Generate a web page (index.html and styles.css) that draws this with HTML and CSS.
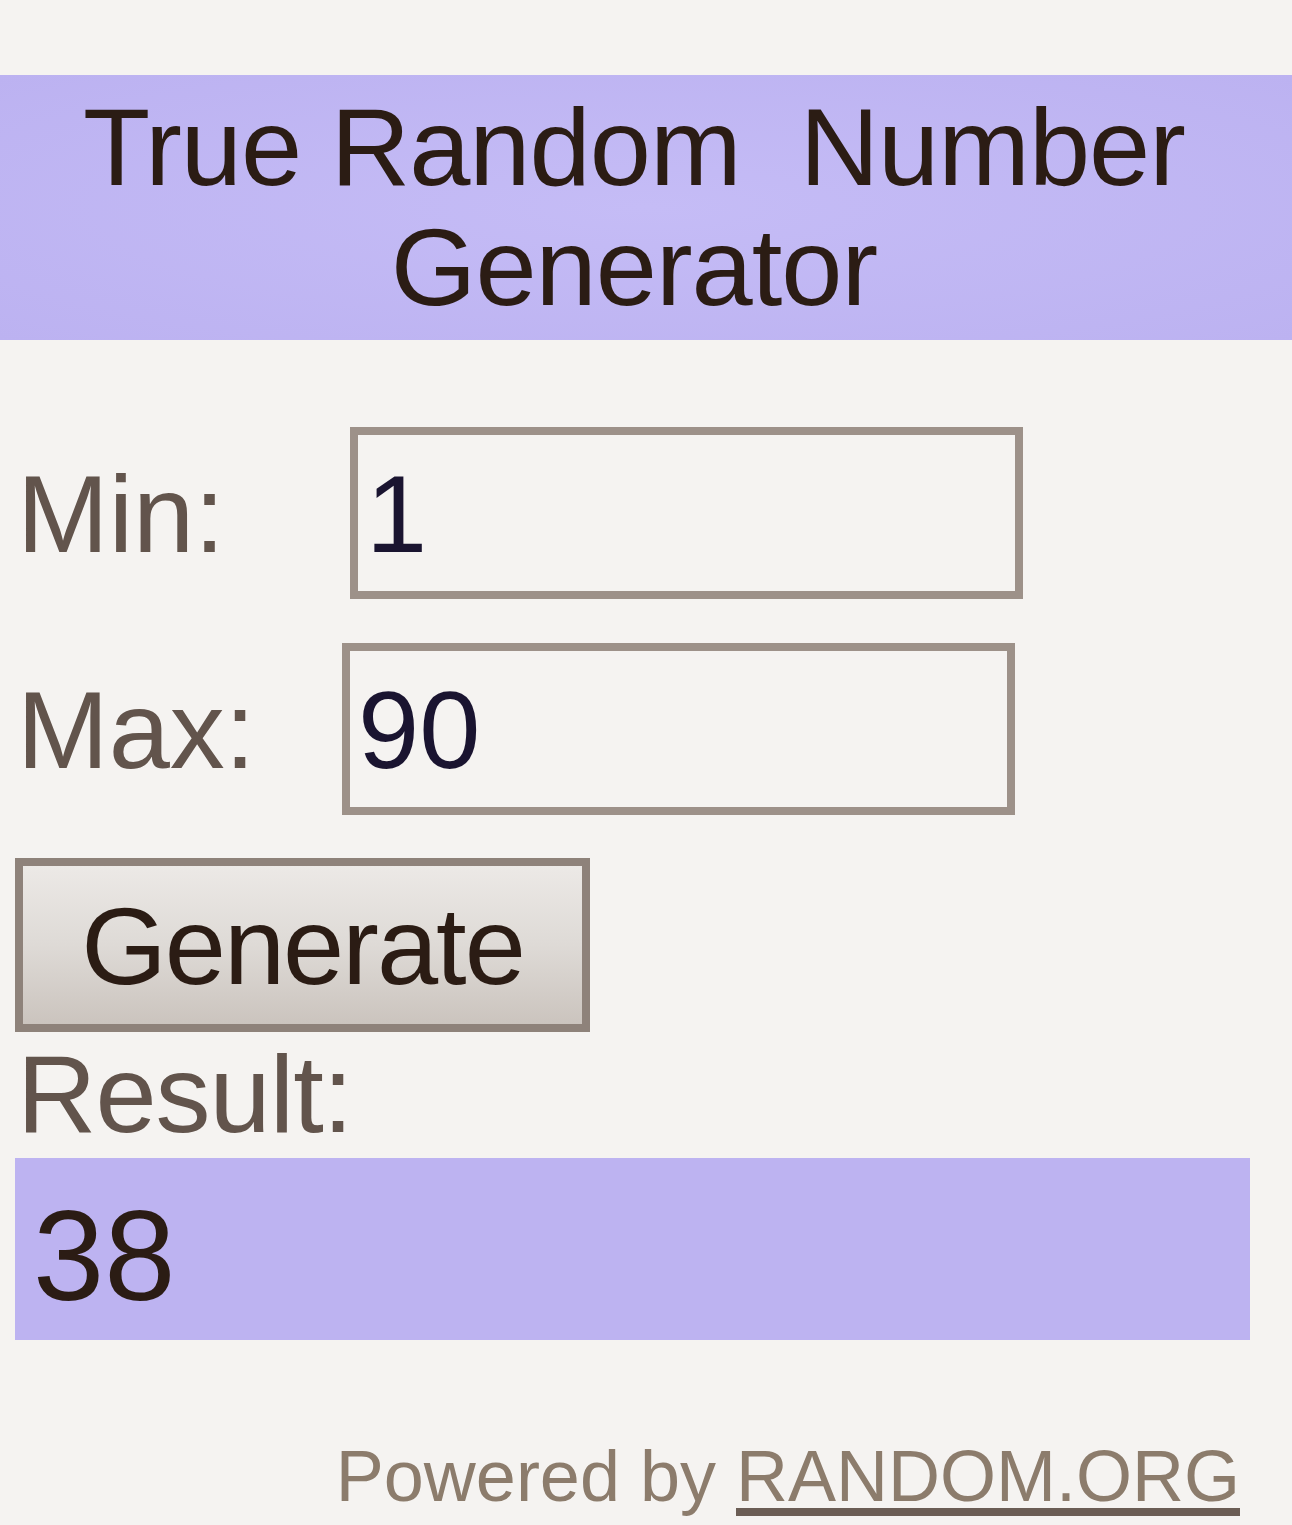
FILE: index.html
```html
<!DOCTYPE html>
<html lang="en">
<head>
  <meta charset="UTF-8">
  <meta name="viewport" content="width=device-width, initial-scale=1.0">
  <title>True Random Number Generator</title>
  <link rel="stylesheet" href="styles.css">
</head>
<body>
  <div class="widget">
    <div class="title">True Random&nbsp; Number<br>Generator</div>

    <div class="form">
      <div class="row row-min">
        <label class="label" for="min">Min:</label>
        <input class="field" id="min" type="text" value="1">
      </div>
      <div class="row row-max">
        <label class="label" for="max">Max:</label>
        <input class="field" id="max" type="text" value="90">
      </div>
      <button class="btn" type="button">Generate</button>
      <div class="result-label">Result:</div>
      <div class="result">38</div>
      <div class="powered">Powered by <a class="link" href="#">RANDOM.ORG</a></div>
    </div>
  </div>
</body>
</html>
```

FILE: styles.css
```css
html,body{margin:0;padding:0;}
body{
  background:#f5f3f1;
  font-family:"Liberation Sans",Arial,sans-serif;
  color:#2b1c14;
}

.widget{padding-top:75px;}

/* lavender header band */
.title{
  background:#bfb5f3;
  background:radial-gradient(ellipse at center,#c5bcf6 0%,#bcb2f1 100%);
  text-align:center;
  font-size:110px;
  line-height:120px;
  letter-spacing:-1px;
  padding:12px 24px 13px 0;
}

.form{padding:0 42px 40px 17px;}

.row{display:flex;align-items:baseline;}
.row-min{margin-top:87px;}
.row-max{margin-top:44px;}
.row-min .label{width:333px;}
.row-max .label{width:325px;}

.label,.result-label{
  font-size:110px;
  color:#62544c;
}

.field{
  box-sizing:border-box;
  width:673px;height:172px;
  border:8px solid #9d9189;
  background:#f5f3f1;
  padding:0 8px;
  margin:0;
  font-family:"Liberation Sans",Arial,sans-serif;
  font-size:110px;
  color:#1a1430;
  outline:none;
}

.btn{
  display:block;
  box-sizing:border-box;
  width:575px;height:174px;
  margin:43px 0 0 -2px;
  border:8px solid #8e827a;
  background:linear-gradient(#ece9e6,#dedad6 50%,#cbc4be);
  font-family:"Liberation Sans",Arial,sans-serif;
  font-size:110px;
  letter-spacing:-2px;
  color:#2b1c14;
  padding:0;
}

.result-label{line-height:110px;margin-top:7px;letter-spacing:-1px;}

.result{
  box-sizing:border-box;
  height:182px;
  margin:9px 0 0 -2px;
  background:#bdb3f1;
  font-size:128px;
  line-height:128px;
  padding:34px 0 0 18px;
  color:#2b1c14;
}

.powered{
  margin-top:101px;
  text-align:right;
  padding-right:10px;
  font-size:72px;
  line-height:70px;
  color:#8c7c6c;
}
.link{
  color:#8c7c6c;
  text-decoration:underline;
  text-decoration-color:#6b5d55;
  text-decoration-thickness:8px;
  text-underline-offset:7px;
}
```
